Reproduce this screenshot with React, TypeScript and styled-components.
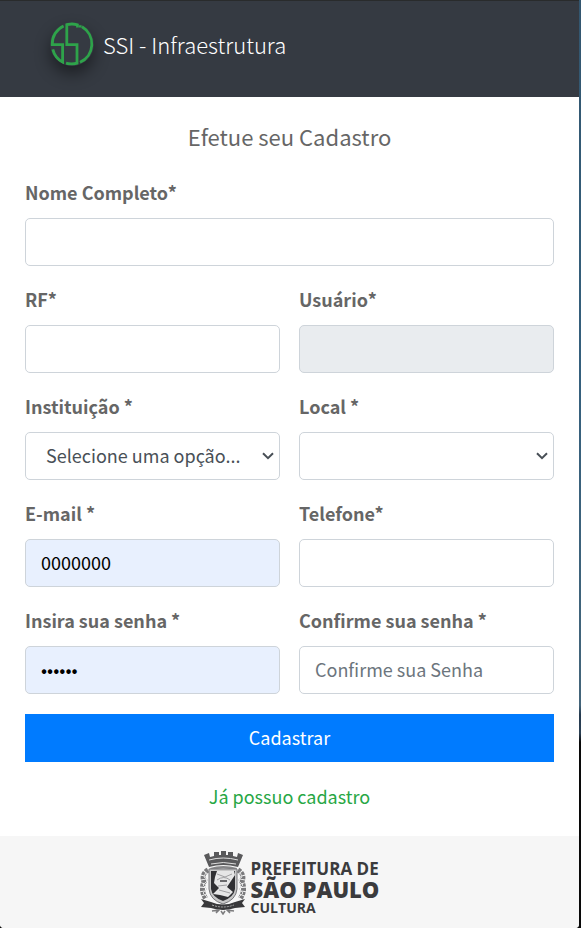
import React from "react";
import styled, { createGlobalStyle } from "styled-components";

const sans = `"Source Sans Pro", "Noto Sans CJK JP", "Noto Sans", sans-serif`;

const chevron = `url("data:image/svg+xml,%3Csvg xmlns='http://www.w3.org/2000/svg' width='12' height='8' fill='none' stroke='%23495057' stroke-width='2'%3E%3Cpath d='M1 1.2L6 6.2L11 1.2'/%3E%3C/svg%3E")`;

const GlobalStyle = createGlobalStyle`
  *, *::before, *::after { box-sizing: border-box; }
  body {
    margin: 0;
    font-family: ${sans};
    font-weight: 400;
    font-size: 18px;
    line-height: 30px;
    color: #666;
    background: #fff;
  }
`;

const Backdrop = styled.div`
  min-height: 100vh;
  display: flex;
  padding-right: 2px;
  background: linear-gradient(#33566f 0, #35607d 40%, #44657a 76%, #263b50 77%, #2b4054 79%, #090909 80%);
`;

const Card = styled.div`
  flex: 1;
  min-width: 0;
  display: flex;
  flex-direction: column;
  overflow: hidden;
  background: #fff;
  border-radius: 0 0 4px 4px;
`;

const Header = styled.header`
  display: flex;
  align-items: flex-start;
  gap: 9px;
  height: 97px;
  padding: 21px 50px;
  background: #353a42;
  border-top: 1px solid #292b2c;
`;

const Mark = styled.svg`
  flex: none;
  width: 44px;
  height: 44px;
  border-radius: 50%;
  box-shadow: 0 8px 16px rgba(0, 0, 0, 0.45);
`;

const Brand = styled.span`
  font-size: 22px;
  font-weight: 300;
  line-height: 44px;
  color: #fff;
`;

const Main = styled.main`
  flex: 1;
  padding: 24px 25px;
`;

const Title = styled.h1`
  margin: 0 0 26px;
  font-size: 22px;
  line-height: 30px;
  font-weight: 400;
  text-align: center;
`;

const Fields = styled.form`
  display: grid;
  grid-template-columns: 1fr 1fr;
  gap: 18px 19px;
`;

const FieldBox = styled.div<{ $wide?: boolean }>`
  grid-column: ${(p) => (p.$wide ? "1 / -1" : "auto")};
  display: flex;
  flex-direction: column;
  gap: 11px;
  min-width: 0;
`;

const Label = styled.label`
  font-weight: 700;
`;

const Input = styled.input<{ $filled?: boolean }>`
  width: 100%;
  height: 48px;
  padding: 0 15px 2px;
  font: inherit;
  color: ${(p) => (p.$filled ? "#000" : "#495057")};
  background: ${(p) => (p.$filled ? "#e8f0fe" : "#fff")};
  border: 1px solid #ced4da;
  border-radius: 5px;

  &::placeholder { color: #6c757d; opacity: 1; }
  &:disabled { background: #e9ecef; }
`;

const Select = styled.select`
  width: 100%;
  height: 48px;
  padding: 0 28px 2px 20px;
  appearance: none;
  font: inherit;
  color: #495057;
  background: #fff ${chevron} no-repeat right 5px center;
  border: 1px solid #ced4da;
  border-radius: 5px;
`;

const Submit = styled.button`
  grid-column: 1 / -1;
  height: 48px;
  margin-top: 2px;
  padding: 0 0 2px;
  font: inherit;
  color: #fff;
  background: #007bff;
  border: 0;
`;

const LoginLink = styled.a`
  display: block;
  width: fit-content;
  margin: 19px auto 0;
  color: #28a745;
  text-decoration: none;
`;

const Footer = styled.footer`
  display: flex;
  justify-content: center;
  align-items: flex-start;
  gap: 5px;
  padding: 15px 0 12px;
  background: #f6f6f6;
  color: #3b3b3d;
`;

const Crest = styled.svg`
  flex: none;
  width: 46px;
  height: 64px;
`;

const City = styled.div`
  display: flex;
  flex-direction: column;
  padding-top: 9px;
  font-family: "Open Sans", "Noto Sans", sans-serif;
  font-weight: 700;
  font-size: 17px;
  line-height: 18px;
`;

const CityName = styled.strong`
  font-size: 22px;
  line-height: 22px;
  font-weight: 800;
`;

const Department = styled.span`
  font-size: 14px;
  line-height: 16px;
`;

type FieldProps = React.InputHTMLAttributes<HTMLInputElement> & {
  id: string;
  label: string;
  wide?: boolean;
  filled?: boolean;
};

function Field({ id, label, wide, filled, ...rest }: FieldProps) {
  return (
    <FieldBox $wide={wide}>
      <Label htmlFor={id}>{label}</Label>
      <Input id={id} $filled={filled} {...rest} />
    </FieldBox>
  );
}

function BrandMark() {
  return (
    <Mark viewBox="1 1 44 44" fill="none" stroke="#2ea34a" strokeWidth="2.8" aria-hidden="true">
      <path d="M14.6 4.9A20 20 0 0 0 3.2 23.6H13.6V41.2A20 20 0 0 1 3.8 28.4" />
      <path d="M28.4 6.4V3.8A20 20 0 0 0 17.8 3.7V23.6H28V42.1A20 20 0 0 1 17 42.1" />
      <path d="M31.2 4.2V6.6M33 5.8A20 20 0 0 1 31 41.3" />
    </Mark>
  );
}

function CityCrest() {
  return (
    <Crest viewBox="0 0 46 64" aria-hidden="true">
      <path
        d="M4 4L9 2L10 6L14 5V1H19V4H21V0H26V4H28V1H33V5L37 6L38 2L43 4L38 16Q23 12 9 16z"
        fill="#59595b"
      />
      <path d="M10 17Q23 13 37 17L36 19Q23 16 11 19z" fill="#858587" />
      <path d="M9 9Q23 5 38 9M11 13Q23 10 36 13" fill="none" stroke="#ddd" />
      <g fill="none" stroke="#7a7a7c" strokeWidth="5" strokeDasharray="3 1">
        <path d="M8 19Q1 23 4 31Q0 39 6 48" />
        <path d="M38 19Q45 23 42 31Q46 39 40 48" />
      </g>
      <g fill="none" stroke="#dcdcdc">
        <path d="M6 21L4 26L8 29L3 34L7 38L3 42L8 47" />
        <path d="M40 21L42 26L38 29L43 34L39 38L43 42L38 47" />
      </g>
      <path d="M9 18H37V38Q36 49 23 53Q10 49 9 38z" fill="#c8c8c8" stroke="#77777a" />
      <path d="M11 20H35V38Q34 46 23 50Q12 46 11 38z" fill="#303033" />
      <path d="M17 20L34 20L35 24L31 30L27 36L33 41L28 46L20 44L13 43L19 37L14 32L15 26z" fill="#e6e6e6" />
      <path d="M17 23L25 26L32 23M17 29Q24 24 30 29M18 35L27 34M19 39L30 42" fill="none" stroke="#a0a0a2" />
      <path d="M20 29H27V31H20z" fill="#6a6a6c" />
      <path d="M1 48L11 51Q23 56 35 51L45 48L42 52L45 56L35 57Q23 61 11 57L1 56L4 52z" fill="#39393b" />
      <path d="M12 54Q23 58 34 54" fill="none" stroke="#aaa" strokeDasharray="2 1" />
      <path d="M12 60L19 59L16 62M21 60L23 63L25 60M34 60L27 59L30 62" fill="none" stroke="#7c7c7e" strokeWidth="1.5" />
    </Crest>
  );
}

export default function App() {
  return (
    <>
      <GlobalStyle />
      <Backdrop>
        <Card>
          <Header>
            <BrandMark />
            <Brand>SSI - Infraestrutura</Brand>
          </Header>
          <Main>
            <Title>Efetue seu Cadastro</Title>
            <Fields onSubmit={(e) => e.preventDefault()}>
              <Field id="nome" label="Nome Completo*" wide />
              <Field id="rf" label="RF*" />
              <Field id="usuario" label="Usuário*" disabled />
              <FieldBox>
                <Label htmlFor="instituicao">Instituição *</Label>
                <Select id="instituicao">
                  <option>Selecione uma opção...</option>
                </Select>
              </FieldBox>
              <FieldBox>
                <Label htmlFor="local">Local *</Label>
                <Select id="local" />
              </FieldBox>
              <Field id="email" label="E-mail *" defaultValue="0000000" filled />
              <Field id="telefone" label="Telefone*" type="tel" />
              <Field id="senha" label="Insira sua senha *" type="password" defaultValue="000000" filled />
              <Field id="confirma" label="Confirme sua senha *" type="password" placeholder="Confirme sua Senha" />
              <Submit type="submit">Cadastrar</Submit>
            </Fields>
            <LoginLink href="#login">Já possuo cadastro</LoginLink>
          </Main>
          <Footer>
            <CityCrest />
            <City>
              <span>PREFEITURA DE</span>
              <CityName>SÃO PAULO</CityName>
              <Department>CULTURA</Department>
            </City>
          </Footer>
        </Card>
      </Backdrop>
    </>
  );
}
